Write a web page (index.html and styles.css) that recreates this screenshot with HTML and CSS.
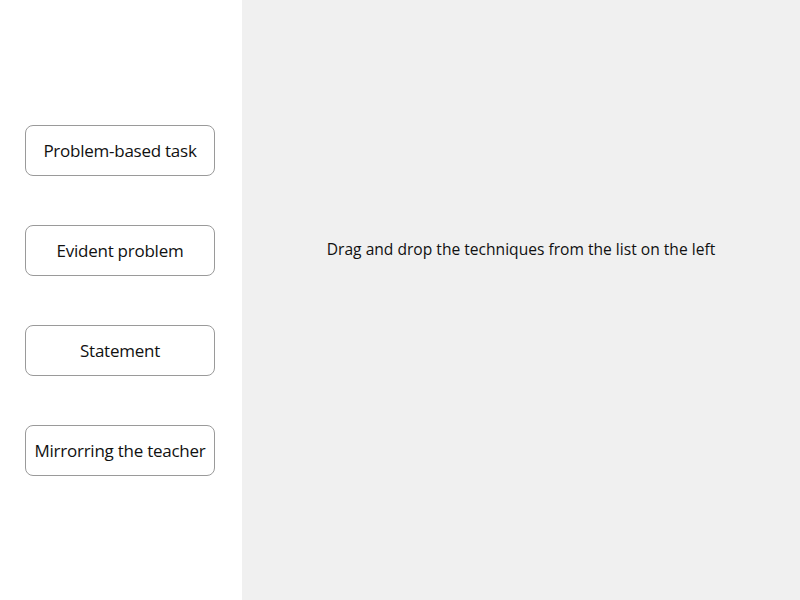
FILE: index.html
```html
<!DOCTYPE html>
<html>
<head>
<meta charset="utf-8">
<link rel="stylesheet" href="styles.css">
</head>
<body>
<div class="app">
  <aside class="list">
    <div class="item">Problem-based task</div>
    <div class="item">Evident problem</div>
    <div class="item">Statement</div>
    <div class="item">Mirrorring the teacher</div>
  </aside>
  <main class="drop">
    <p class="hint">Drag and drop the techniques from the list on the left</p>
  </main>
</div>
</body>
</html>
```
FILE: styles.css
```css
html, body {
  margin: 0;
  padding: 0;
  width: 800px;
  height: 600px;
  overflow: hidden;
  font-family: "Open Sans", "Noto Sans", sans-serif;
  color: #111;
}
.app {
  display: flex;
  width: 800px;
  height: 600px;
}
.list {
  width: 242px;
  flex: none;
  background: #fff;
  display: flex;
  flex-direction: column;
  justify-content: center;
  gap: 49px;
  padding-left: 25px;
  box-sizing: border-box;
}
.item {
  width: 190px;
  height: 51px;
  box-sizing: border-box;
  border: 1px solid #9a9a9a;
  border-radius: 8px;
  display: flex;
  align-items: center;
  justify-content: center;
  font-size: 17px;
  letter-spacing: -0.25px;
  white-space: nowrap;
}
.drop {
  flex: 1;
  background: #f0f0f0;
  display: flex;
  justify-content: center;
  padding-top: 237px;
  box-sizing: border-box;
}
.hint {
  margin: 0;
  font-size: 15.6px;
  letter-spacing: 0;
  line-height: 24px;
  height: 24px;
}
```
